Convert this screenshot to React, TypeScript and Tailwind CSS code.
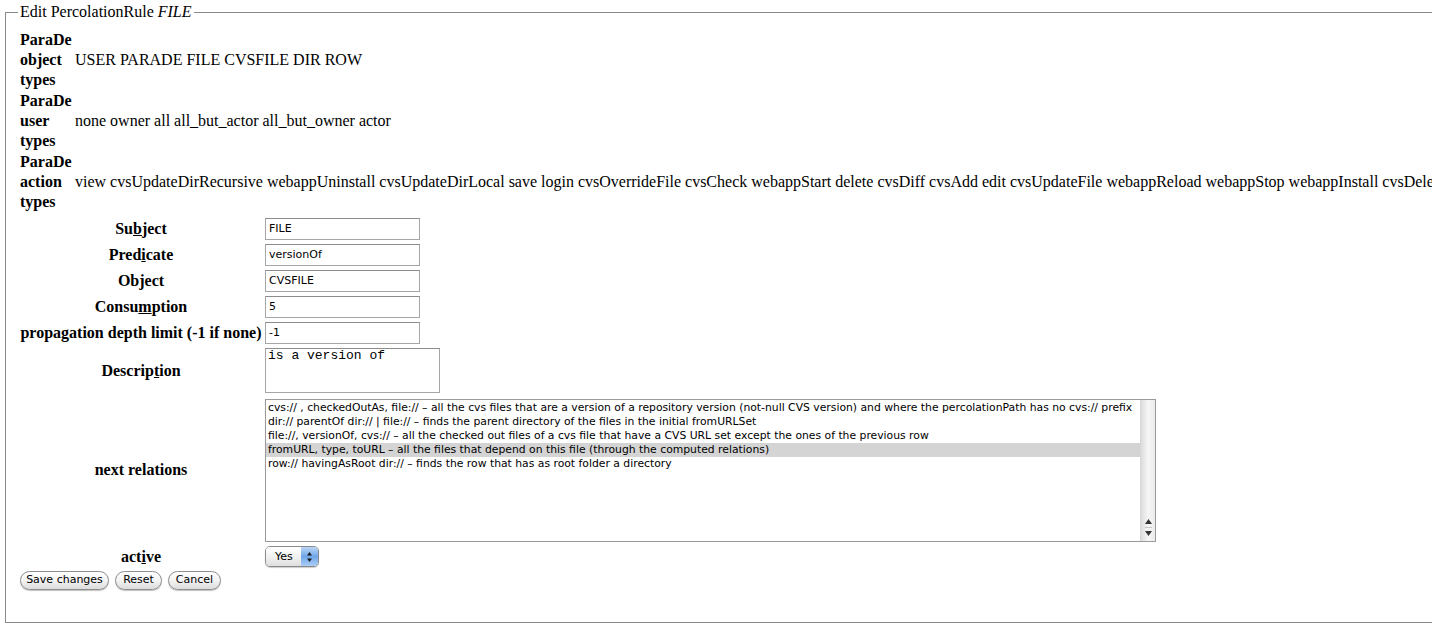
import React from "react";

const serif = { fontFamily: '"Liberation Serif", "Times New Roman", serif' };
const sans = { fontFamily: '"DejaVu Sans", "Lucida Grande", Verdana, sans-serif' };
const mono = { fontFamily: '"Liberation Mono", "Courier New", monospace' };

function ParaRow({ kind, value }: { kind: string; value: string }) {
  return (
    <div className="flex items-center">
      <div className="w-[55px] shrink-0 font-bold leading-[20px]">
        <div>ParaDe</div>
        <div>{kind}</div>
        <div>types</div>
      </div>
      <div className="whitespace-nowrap leading-[20px]">{value}</div>
    </div>
  );
}

function TextInput({ value }: { value: string }) {
  return (
    <div
      className="w-[155px] h-[22px] border border-[#a6a6a6] border-t-[#8c8c8c] bg-white pl-[3px] text-[11px] leading-[20px] text-black"
      style={sans}
    >
      {value}
    </div>
  );
}

function Label({ children }: { children: React.ReactNode }) {
  return <div className="text-center font-bold leading-[20px]">{children}</div>;
}

function PillButton({ children, w }: { children: React.ReactNode; w: string }) {
  return (
    <div
      className={`${w} h-[19px] rounded-full border border-[#8e8e8e] bg-gradient-to-b from-white via-[#f3f3f3] to-[#dcdcdc] shadow-[0_1px_1px_rgba(0,0,0,0.25)] flex items-center justify-center text-[11px] text-black`}
      style={sans}
    >
      {children}
    </div>
  );
}

const relations = [
  "cvs:// , checkedOutAs, file:// – all the cvs files that are a version of a repository version (not-null CVS version) and where the percolationPath has no cvs:// prefix",
  "dir:// parentOf dir:// | file:// – finds the parent directory of the files in the initial fromURLSet",
  "file://, versionOf, cvs:// – all the checked out files of a cvs file that have a CVS URL set except the ones of the previous row",
  "fromURL, type, toURL – all the files that depend on this file (through the computed relations)",
  "row:// havingAsRoot dir:// – finds the row that has as root folder a directory",
];

export default function App() {
  return (
    <div className="w-[1432px] h-[634px] overflow-hidden bg-white text-black text-[16px]" style={serif}>
      <fieldset className="ml-[5px] mt-[3px] w-[1800px] h-[620px] border border-[#8a8a8a] pl-[14px] pt-[9px]">
        <legend className="-ml-[2px] px-[2px] leading-[18px]">
          Edit PercolationRule <i>FILE</i>
        </legend>

        <div className="flex flex-col gap-[1px]">
          <ParaRow kind="object" value="USER PARADE FILE CVSFILE DIR ROW" />
          <ParaRow kind="user" value="none owner all all_but_actor all_but_owner actor" />
          <ParaRow
            kind="action"
            value="view cvsUpdateDirRecursive webappUninstall cvsUpdateDirLocal save login cvsOverrideFile cvsCheck webappStart delete cvsDiff cvsAdd edit cvsUpdateFile webappReload webappStop webappInstall cvsDeleteFile"
          />
        </div>

        <div className="mt-[6px] grid grid-cols-[242px_auto] gap-x-[3px] gap-y-[4px] items-center justify-start">
          <Label>
            Su<u>b</u>ject
          </Label>
          <TextInput value="FILE" />
          <Label>
            Pred<u>i</u>cate
          </Label>
          <TextInput value="versionOf" />
          <Label>Object</Label>
          <TextInput value="CVSFILE" />
          <Label>
            Consu<u>m</u>ption
          </Label>
          <TextInput value="5" />
          <Label>propagation depth limit (-1 if none)</Label>
          <TextInput value="-1" />
          <Label>
            Descrip<u>t</u>ion
          </Label>
          <div
            className="w-[175px] h-[45px] border border-[#a6a6a6] border-t-[#8c8c8c] bg-white pl-[2px] text-[13px] leading-[14px]"
            style={mono}
          >
            is a version of
          </div>
          <Label>next relations</Label>
          <div className="mt-[2px] w-[891px] h-[143px] border border-[#9a9a9a] bg-white flex">
            <div className="flex-1 pt-[1px] text-[10.8px] leading-[14px] whitespace-nowrap overflow-hidden" style={sans}>
              {relations.map((r, i) => (
                <div key={i} className={`pl-[2px] h-[14px] ${i === 3 ? "bg-[#d4d4d4]" : ""}`}>
                  {r}
                </div>
              ))}
            </div>
            <div className="w-[15px] h-full border-l border-[#d6d6d6] bg-gradient-to-r from-[#dcdcdc] via-[#f6f6f6] to-[#ececec] flex flex-col justify-end items-center pb-[2px]">
              <svg width="9" height="24" viewBox="0 0 9 24">
                <path d="M4.5 4 L8 9 L1 9 Z" fill="#333" />
                <line x1="1" y1="12.5" x2="8" y2="12.5" stroke="#c8c8c8" />
                <path d="M1 16 L8 16 L4.5 21 Z" fill="#333" />
              </svg>
            </div>
          </div>
          <Label>
            act<u>i</u>ve
          </Label>
          <div
            className="w-[54px] h-[21px] rounded-[5px] border border-[#8a8a8a] flex overflow-hidden shadow-[0_1px_1px_rgba(0,0,0,0.2)] text-[11px]"
            style={sans}
          >
            <div className="flex-1 bg-gradient-to-b from-white via-[#f2f2f2] to-[#dedede] pl-[9px] leading-[19px]">Yes</div>
            <div className="w-[17px] bg-gradient-to-b from-[#bcd6f5] via-[#6fa6e8] to-[#aacdf5] flex items-center justify-center">
              <svg width="7" height="12" viewBox="0 0 7 12">
                <path d="M3.5 1 L6 4.5 L1 4.5 Z" fill="#1a1a1a" />
                <path d="M1 7.5 L6 7.5 L3.5 11 Z" fill="#1a1a1a" />
              </svg>
            </div>
          </div>
        </div>

        <div className="mt-[4px] flex gap-[6px]">
          <PillButton w="w-[89px]">Save changes</PillButton>
          <PillButton w="w-[47px]">Reset</PillButton>
          <PillButton w="w-[53px]">Cancel</PillButton>
        </div>
      </fieldset>
    </div>
  );
}
